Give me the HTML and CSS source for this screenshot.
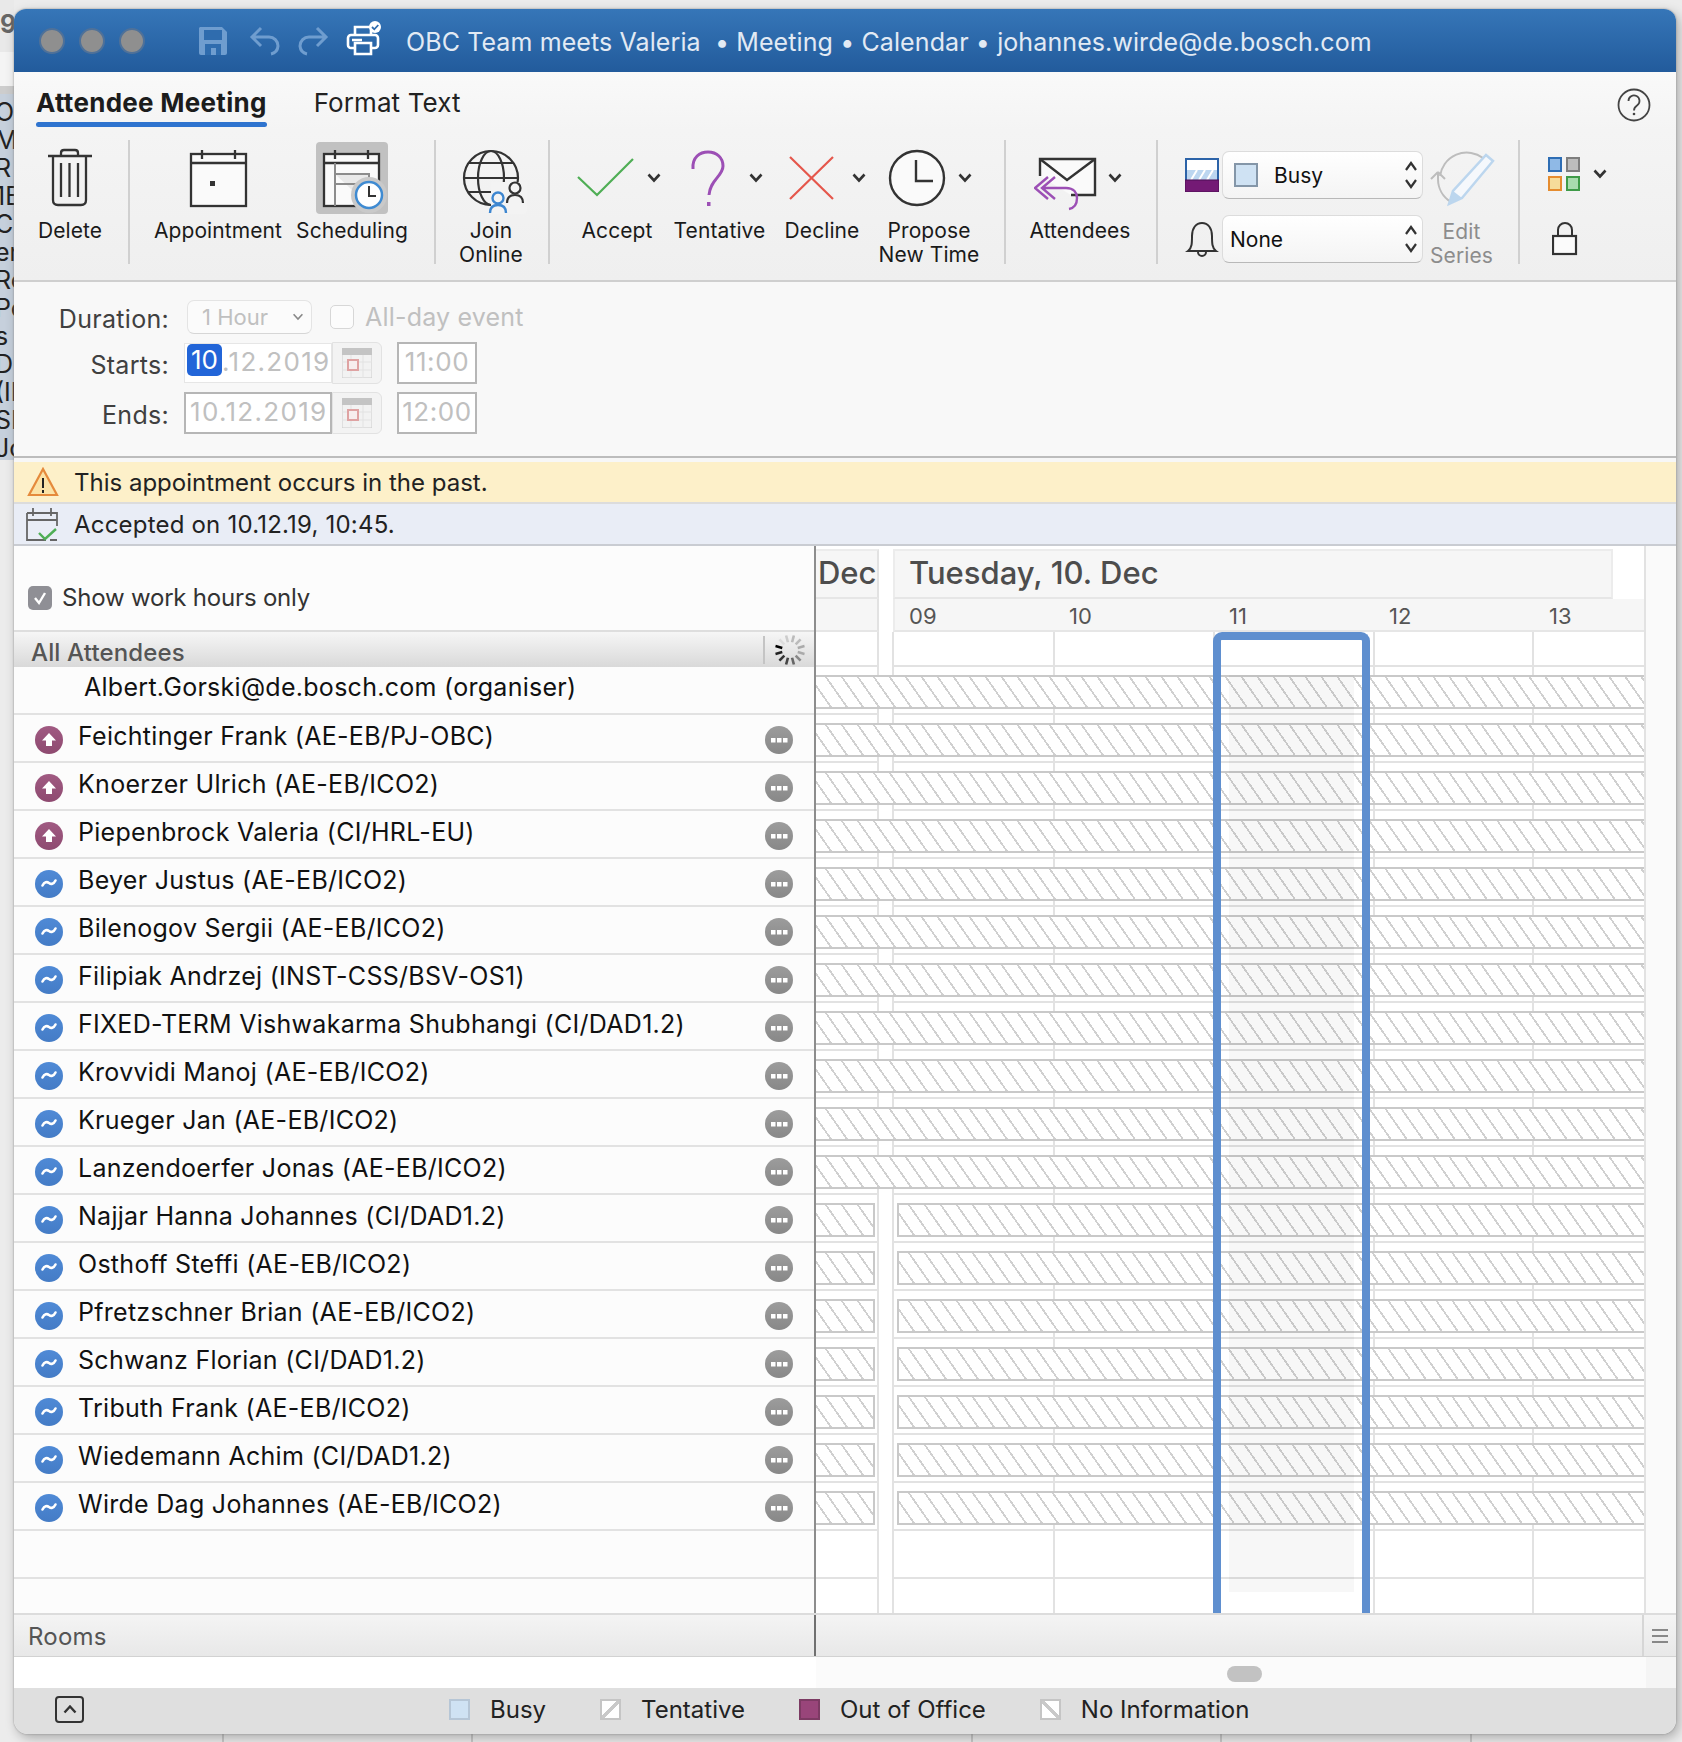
FILE: index.html
```html
<!DOCTYPE html>
<html lang="en">
<head>
<meta charset="utf-8">
<title>OBC Team meets Valeria</title>
<link rel="stylesheet" href="styles.css">
</head>
<body>
<svg class="defs" width="0" height="0" aria-hidden="true">
  <defs>
    <linearGradient id="gUp" x1="0" y1="0" x2="0" y2="1"><stop offset="0" stop-color="#a05a82"/><stop offset="1" stop-color="#8e4a70"/></linearGradient>
    <linearGradient id="gTilde" x1="0" y1="0" x2="0" y2="1"><stop offset="0" stop-color="#4f8ad6"/><stop offset="1" stop-color="#447cc6"/></linearGradient>
    <linearGradient id="gDots" x1="0" y1="0" x2="0" y2="1"><stop offset="0" stop-color="#9c9c9c"/><stop offset="1" stop-color="#888"/></linearGradient>
    <symbol id="up" viewBox="0 0 28 28"><circle cx="14" cy="14" r="14" fill="url(#gUp)"/><path d="M14 7l7 7.500h-4v5.500h-6v-5.500H7z" fill="#fff"/></symbol>
    <symbol id="tilde" viewBox="0 0 28 28"><circle cx="14" cy="14" r="14" fill="url(#gTilde)"/><path d="M7.500 15.500c2-4 4.500-4 6.500-2.500s4.500 1.500 6.500-2.500" fill="none" stroke="#fff" stroke-width="2.600" stroke-linecap="round"/></symbol>
    <symbol id="dots" viewBox="0 0 28 28"><circle cx="14" cy="14" r="14" fill="url(#gDots)"/><rect x="6" y="12" width="4.500" height="4.500" fill="#fff"/><rect x="12" y="12" width="4.500" height="4.500" fill="#fff"/><rect x="18" y="12" width="4.500" height="4.500" fill="#fff"/></symbol>
    <symbol id="chev" viewBox="0 0 14 10"><path d="M1.500 1.500L7 7.500l5.500-6" fill="none" stroke="#333" stroke-width="2.600"/></symbol>
    <symbol id="updown" viewBox="0 0 14 34"><path d="M2 12l5-7 5 7M2 22l5 7 5-7" fill="none" stroke="#333" stroke-width="2.200"/></symbol>
    <symbol id="cal" viewBox="0 0 30 30"><rect x="0" y="0" width="30" height="30" fill="#f2f2f2" stroke="#ccc"/><rect width="30" height="7" fill="#c4c4c4"/><path d="M0 14h30M0 22h30M9 7v23M21 7v23" stroke="#e2e2e2"/><rect x="6" y="12" width="10" height="10" fill="#f7eeee" stroke="#dfa3a3" stroke-width="2"/></symbol>
  </defs>
</svg>
<div class="desk">
  <div class="strip">
    <div class="strip-top"><span class="nine">9</span></div>
    <div class="strip-list">
      <div>O</div><div>M</div><div>R</div><div>1E</div><div>Cc</div><div>er</div><div>Rc</div><div>Pe</div><div>s</div><div>Di</div><div>(II</div><div>SI</div><div>Jc</div>
    </div>
    <div class="strip-rest"></div>
  </div>
  <main class="window">
    <header class="titlebar">
      <span class="light"></span><span class="light"></span><span class="light"></span>
      <svg class="tb-save" width="30" height="30" viewBox="0 0 30 30"><path d="M2 1h22l5 5v21a2 2 0 0 1-2 2H3a2 2 0 0 1-2-2V2z" fill="#6f9dcf"/><rect x="6" y="4" width="18" height="10" fill="#2f6cae"/><path d="M7 29v-11h16v11h-5v-7h-5v7z" fill="#2f6cae"/></svg>
      <svg class="tb-undo" width="32" height="30" viewBox="0 0 32 30"><path d="M12 2L3 11l9 9M3 11h17a9 9 0 0 1 9 9 9 9 0 0 1-7 8" fill="none" stroke="#6f9dcf" stroke-width="3"/></svg>
      <svg class="tb-redo" width="32" height="30" viewBox="0 0 32 30"><path d="M20 2l9 9-9 9M29 11H12a9 9 0 0 0-9 9 9 9 0 0 0 7 8" fill="none" stroke="#6f9dcf" stroke-width="3"/></svg>
      <svg class="tb-print" width="36" height="36" viewBox="0 0 36 36"><path d="M9 14V6h16v8M9 27H5a3 3 0 0 1-3-3V17a3 3 0 0 1 3-3h24a3 3 0 0 1 3 3v7a3 3 0 0 1-3 3h-4M9 22h16v11H9z" fill="none" stroke="#fff" stroke-width="2.600"/><path d="M6 19h10" stroke="#fff" stroke-width="2.600"/><circle cx="29" cy="6" r="6" fill="#fff"/><path d="M26 6l2.300 2.300 4-4.300" fill="none" stroke="#2f6cae" stroke-width="1.800"/></svg>
      <span class="title-text">OBC Team meets Valeria &nbsp;• Meeting • Calendar • johannes.wirde@de.bosch.com</span>
    </header>

    <nav class="tabs">
      <span class="tab tab-on">Attendee Meeting</span>
      <span class="tab">Format Text</span>
      <svg class="help" width="34" height="34" viewBox="0 0 34 34"><circle cx="17" cy="17" r="15.500" fill="none" stroke="#444" stroke-width="1.800"/><path d="M11.500 13a5.500 5.500 0 1 1 8.500 4.500c-2 1.300-3 2-3 5" fill="none" stroke="#444" stroke-width="1.800"/><circle cx="17" cy="26" r="1.300" fill="#444"/></svg>
    </nav>

    <section class="ribbon">
      <div class="group g1">
        <div class="item w112">
          <svg class="ico" width="48" height="72" viewBox="0 0 48 72"><g fill="none" stroke="#333" stroke-width="2.300"><path d="M2 14h44M7 14v44q0 5 5 5h23q5 0 5-5V14M15 14v-3q0-3 3-3h11q3 0 3 3v3M15 21v34M23.500 21v34M32 21v34"/></g></svg>
          <div class="lbl">Delete</div>
        </div>
      </div>
      <div class="group g2">
        <div class="item w134">
          <svg class="ico" width="72" height="72" viewBox="0 0 72 72"><rect x="9" y="12" width="55" height="52" fill="#fafafa" stroke="#333" stroke-width="2.300"/><path d="M9 21h55M20 8v9M53 8v9" stroke="#333" stroke-width="2.300"/><rect x="28" y="39" width="5" height="5" fill="#333"/></svg>
          <div class="lbl">Appointment</div>
        </div>
        <div class="item w134">
          <svg class="ico ico-on" width="72" height="72" viewBox="0 0 72 72"><rect x="8" y="12" width="55" height="52" fill="#fafafa" stroke="#333" stroke-width="2.300"/><path d="M8 21h55M19 8v9M52 8v9" stroke="#333" stroke-width="2.300"/><path d="M19 21v43M19 32h34v32M19 42h34" fill="#e9e9e9" stroke="#8c8c8c" stroke-width="2"/><circle cx="53" cy="53" r="18" fill="#c9c9c9"/><circle cx="53" cy="53" r="13" fill="#fff" stroke="#3f8bd2" stroke-width="2.500"/><path d="M53 44v10h7" fill="none" stroke="#333" stroke-width="2"/></svg>
          <div class="lbl">Scheduling</div>
        </div>
      </div>
      <div class="group g3">
        <div class="item w110">
          <svg class="ico" width="72" height="72" viewBox="0 0 72 72"><g fill="none" stroke="#333" stroke-width="2.200"><circle cx="36" cy="36" r="27"/><ellipse cx="36" cy="36" rx="13" ry="27"/><path d="M9 36h54M13 21h46M13 50h46"/></g><rect x="36" y="40" width="36" height="32" fill="#f3f3f3"/><circle cx="60" cy="46" r="5.500" fill="none" stroke="#333" stroke-width="2.200"/><path d="M52 61c0-6 3-8 8-8s8 2 8 8" fill="none" stroke="#333" stroke-width="2.200"/><circle cx="43" cy="56" r="5.500" fill="none" stroke="#3d86d0" stroke-width="2.400"/><path d="M35 71c0-6 3-8 8-8s8 2 8 8" fill="none" stroke="#3d86d0" stroke-width="2.400"/></svg>
          <div class="lbl">Join<br>Online</div>
        </div>
      </div>
      <div class="group g4">
        <div class="item w102">
          <div class="iconrow pad-accept">
            <svg width="66" height="72" viewBox="0 0 66 72"><path d="M6 35l19 18 36-36" fill="none" stroke="#4fae55" stroke-width="2.200"/></svg>
            <svg class="chev" width="14" height="10"><use href="#chev"/></svg>
          </div>
          <div class="lbl">Accept</div>
        </div>
        <div class="item w103">
          <div class="iconrow pad-tent">
            <svg width="44" height="72" viewBox="0 0 44 72"><path d="M7 27C6 15 14 10 22 10c9 0 15 6 15 14 0 10-13 14-14 29" fill="none" stroke="#9c4fb5" stroke-width="3"/><rect x="21" y="60" width="3.500" height="4" fill="#9c4fb5"/></svg>
            <svg class="chev" width="14" height="10"><use href="#chev"/></svg>
          </div>
          <div class="lbl">Tentative</div>
        </div>
        <div class="item w102">
          <div class="iconrow pad-dec">
            <svg width="50" height="72" viewBox="0 0 50 72"><path d="M4 15l43 42M47 15L4 57" fill="none" stroke="#e5574c" stroke-width="2.200"/></svg>
            <svg class="chev" width="14" height="10"><use href="#chev"/></svg>
          </div>
          <div class="lbl">Decline</div>
        </div>
        <div class="item w112">
          <div class="iconrow pad-prop">
            <svg width="60" height="72" viewBox="0 0 60 72"><circle cx="30" cy="36" r="27" fill="#fafafa" stroke="#333" stroke-width="2.400"/><path d="M29 18v21h17" fill="none" stroke="#333" stroke-width="2.400"/></svg>
            <svg class="chev" width="14" height="10"><use href="#chev"/></svg>
          </div>
          <div class="lbl">Propose<br>New Time</div>
        </div>
      </div>
      <div class="group g5">
        <div class="item w120">
          <div class="iconrow pad-att">
            <svg width="66" height="72" viewBox="0 0 66 72"><path d="M6 34V17h55v36H37" fill="#fafafa" stroke="#333" stroke-width="2.400"/><path d="M6 17l27 21 28-21" fill="none" stroke="#333" stroke-width="2.400"/><path d="M21 35L8 46l13 11M14 35L1 46l13 11M8 46h24c8 0 11 5 11 10 0 6-3 10-8 11" fill="none" stroke="#9c4fb5" stroke-width="2.400"/></svg>
            <svg class="chev" width="14" height="10"><use href="#chev"/></svg>
          </div>
          <div class="lbl">Attendees</div>
        </div>
      </div>
      <div class="group g6">
        <div class="selects">
          <div class="selrow">
            <svg width="34" height="34" viewBox="0 0 34 34"><rect x="1" y="1" width="32" height="32" fill="#fff" stroke="#2c63a8" stroke-width="2"/><rect x="2" y="12" width="30" height="10" fill="#bcd6f0"/><path d="M6 22l6-10M14 22l6-10M22 22l6-10" stroke="#fff" stroke-width="2"/><rect y="22" width="34" height="12" fill="#741a75" stroke="#4a0f55"/></svg>
            <div class="sel"><span class="swatch-busy"></span><span>Busy</span><svg class="ud" width="14" height="34"><use href="#updown"/></svg></div>
          </div>
          <div class="selrow">
            <svg width="34" height="40" viewBox="0 0 34 40"><path d="M3 32c4-3 4-8 4-15 0-8 4-13 10-13s10 5 10 13c0 7 0 12 4 15zM13 33a4 4 0 0 0 8 0" fill="none" stroke="#333" stroke-width="2"/></svg>
            <div class="sel sel-none"><span>None</span><svg class="ud" width="14" height="34"><use href="#updown"/></svg></div>
          </div>
        </div>
        <div class="item w76">
          <svg class="ico" width="70" height="72" viewBox="0 0 70 72"><path d="M12 34a27 27 0 0 1 43-18M10 30l-7 7M10 30l7 7M10 30v7a27 27 0 0 0 13 23" fill="none" stroke="#bdbdbd" stroke-width="2"/><path d="M58 13l7 6-31 37-13 6 4-13z" fill="#f5f8fc" stroke="#bcd6ee" stroke-width="2.500"/><path d="M21 62l4-13 9 7z" fill="#bcd6ee"/></svg>
          <div class="lbl lbl-off">Edit<br>Series</div>
        </div>
      </div>
      <div class="group g7">
        <div class="tiles">
          <svg width="34" height="34" viewBox="0 0 34 34"><rect x="1" y="1" width="12" height="13" fill="#8fb9e6" stroke="#2d6db4" stroke-width="2"/><rect x="19" y="1" width="12" height="13" fill="#bdbdbd" stroke="#7e7e7e" stroke-width="2"/><rect x="1" y="20" width="12" height="13" fill="#f6dc9a" stroke="#e58c2f" stroke-width="2"/><rect x="19" y="20" width="12" height="13" fill="#a9dcae" stroke="#3f9b48" stroke-width="2"/></svg>
          <svg class="chev-tiles" width="14" height="10"><use href="#chev"/></svg>
        </div>
        <svg class="lock" width="26" height="34" viewBox="0 0 26 34"><path d="M6 14V8a7 7 0 0 1 14 0v6" fill="none" stroke="#333" stroke-width="2"/><rect x="1" y="14" width="23" height="18" fill="#fbfbfb" stroke="#333" stroke-width="2.200"/></svg>
      </div>
    </section>

    <section class="form">
      <div class="frow">
        <label class="flabel">Duration:</label>
        <div class="dur">1 Hour<svg width="12" height="8" viewBox="0 0 14 10"><path d="M1.500 1.500L7 7.500l5.500-6" fill="none" stroke="#888" stroke-width="2"/></svg></div>
        <span class="chk"></span>
        <span class="allday">All-day event</span>
      </div>
      <div class="frow frow-date">
        <label class="flabel">Starts:</label>
        <div class="datef datef-focus"><span class="sel10">10</span>.12.2019</div>
        <div class="calbtn"><svg width="30" height="30"><use href="#cal"/></svg></div>
        <div class="timef">11:00</div>
      </div>
      <div class="frow frow-date">
        <label class="flabel">Ends:</label>
        <div class="datef">10.12.2019</div>
        <div class="calbtn"><svg width="30" height="30"><use href="#cal"/></svg></div>
        <div class="timef">12:00</div>
      </div>
    </section>

    <div class="note note-warn">
      <svg width="32" height="30" viewBox="0 0 32 30"><path d="M16 2L2 28h28z" fill="#fbe3a8" stroke="#e58a3c" stroke-width="2.200"/><path d="M16 11v10M16 23v3" stroke="#222" stroke-width="2"/></svg>
      <span>This appointment occurs in the past.</span>
    </div>
    <div class="note note-info">
      <svg width="32" height="34" viewBox="0 0 32 34"><path d="M1 6h30v13M1 6v27h19M1 13h30M7 1v8M25 1v8M24 33h7" fill="none" stroke="#666" stroke-width="1.800"/><path d="M13 26l6 6 11-10" fill="none" stroke="#4fae55" stroke-width="2.400"/></svg>
      <span>Accepted on 10.12.19, 10:45.</span>
    </div>

    <section class="split">
      <div class="people">
        <div class="workhours"><span class="cb-on"><svg width="24" height="24" viewBox="0 0 24 24"><path d="M7 12l4 5 6-10" fill="none" stroke="#fff" stroke-width="2.400"/></svg></span><span>Show work hours only</span></div>
        <div class="allhead">
          <span>All Attendees</span>
          <span class="allsep"></span>
          <svg class="spin" width="32" height="32" viewBox="-16 -16 32 32"><g stroke-width="2.600">
            <path d="M0-8v-7" stroke="#ccc" transform="rotate(-15)"/><path d="M0-8v-7" stroke="#bbb" transform="rotate(15)"/><path d="M0-8v-7" stroke="#bbb" transform="rotate(45)"/><path d="M0-8v-7" stroke="#aaa" transform="rotate(75)"/><path d="M0-8v-7" stroke="#aaa" transform="rotate(105)"/><path d="M0-8v-7" stroke="#888" transform="rotate(135)"/><path d="M0-8v-7" stroke="#666" transform="rotate(165)"/><path d="M0-8v-7" stroke="#444" transform="rotate(195)"/><path d="M0-8v-7" stroke="#333" transform="rotate(225)"/><path d="M0-8v-7" stroke="#222" transform="rotate(255)"/><path d="M0-8v-7" stroke="#000" transform="rotate(285)"/><path d="M0-8v-7" stroke="#ddd" transform="rotate(315)"/>
          </g></svg>
        </div>
        <div class="person person-org"><span class="pname">Albert.Gorski@de.bosch.com (organiser)</span></div>
        <div class="person"><svg class="st"><use href="#up"/></svg><span class="pname">Feichtinger Frank (AE-EB/PJ-OBC)</span><svg class="more"><use href="#dots"/></svg></div>
        <div class="person"><svg class="st"><use href="#up"/></svg><span class="pname">Knoerzer Ulrich (AE-EB/ICO2)</span><svg class="more"><use href="#dots"/></svg></div>
        <div class="person"><svg class="st"><use href="#up"/></svg><span class="pname">Piepenbrock Valeria (CI/HRL-EU)</span><svg class="more"><use href="#dots"/></svg></div>
        <div class="person"><svg class="st"><use href="#tilde"/></svg><span class="pname">Beyer Justus (AE-EB/ICO2)</span><svg class="more"><use href="#dots"/></svg></div>
        <div class="person"><svg class="st"><use href="#tilde"/></svg><span class="pname">Bilenogov Sergii (AE-EB/ICO2)</span><svg class="more"><use href="#dots"/></svg></div>
        <div class="person"><svg class="st"><use href="#tilde"/></svg><span class="pname">Filipiak Andrzej (INST-CSS/BSV-OS1)</span><svg class="more"><use href="#dots"/></svg></div>
        <div class="person"><svg class="st"><use href="#tilde"/></svg><span class="pname">FIXED-TERM Vishwakarma Shubhangi (CI/DAD1.2)</span><svg class="more"><use href="#dots"/></svg></div>
        <div class="person"><svg class="st"><use href="#tilde"/></svg><span class="pname">Krovvidi Manoj (AE-EB/ICO2)</span><svg class="more"><use href="#dots"/></svg></div>
        <div class="person"><svg class="st"><use href="#tilde"/></svg><span class="pname">Krueger Jan (AE-EB/ICO2)</span><svg class="more"><use href="#dots"/></svg></div>
        <div class="person"><svg class="st"><use href="#tilde"/></svg><span class="pname">Lanzendoerfer Jonas (AE-EB/ICO2)</span><svg class="more"><use href="#dots"/></svg></div>
        <div class="person"><svg class="st"><use href="#tilde"/></svg><span class="pname">Najjar Hanna Johannes (CI/DAD1.2)</span><svg class="more"><use href="#dots"/></svg></div>
        <div class="person"><svg class="st"><use href="#tilde"/></svg><span class="pname">Osthoff Steffi (AE-EB/ICO2)</span><svg class="more"><use href="#dots"/></svg></div>
        <div class="person"><svg class="st"><use href="#tilde"/></svg><span class="pname">Pfretzschner Brian (AE-EB/ICO2)</span><svg class="more"><use href="#dots"/></svg></div>
        <div class="person"><svg class="st"><use href="#tilde"/></svg><span class="pname">Schwanz Florian (CI/DAD1.2)</span><svg class="more"><use href="#dots"/></svg></div>
        <div class="person"><svg class="st"><use href="#tilde"/></svg><span class="pname">Tributh Frank (AE-EB/ICO2)</span><svg class="more"><use href="#dots"/></svg></div>
        <div class="person"><svg class="st"><use href="#tilde"/></svg><span class="pname">Wiedemann Achim (CI/DAD1.2)</span><svg class="more"><use href="#dots"/></svg></div>
        <div class="person"><svg class="st"><use href="#tilde"/></svg><span class="pname">Wirde Dag Johannes (AE-EB/ICO2)</span><svg class="more"><use href="#dots"/></svg></div>
        <div class="person"></div>
      </div>
      <div class="gantt">
        <div class="gmain">
          <div class="ghead">
            <div class="dayrow"><div class="daycell-dec">Dec</div><div class="daycell">Tuesday, 10. Dec</div></div>
            <div class="hourrow"><div class="hourcell-dec"></div><div class="hours"><span>09</span><span>10</span><span>11</span><span>12</span><span>13</span></div></div>
          </div>
          <div class="gbody">
            <div class="gtop"></div>
            <div class="grow"><div class="bar bar-full"></div></div>
            <div class="grow"><div class="bar bar-full"></div></div>
            <div class="grow"><div class="bar bar-full"></div></div>
            <div class="grow"><div class="bar bar-full"></div></div>
            <div class="grow"><div class="bar bar-full"></div></div>
            <div class="grow"><div class="bar bar-full"></div></div>
            <div class="grow"><div class="bar bar-full"></div></div>
            <div class="grow"><div class="bar bar-full"></div></div>
            <div class="grow"><div class="bar bar-full"></div></div>
            <div class="grow"><div class="bar bar-full"></div></div>
            <div class="grow"><div class="bar bar-full"></div></div>
            <div class="grow"><div class="bar bar-a"></div><div class="bar bar-b"></div></div>
            <div class="grow"><div class="bar bar-a"></div><div class="bar bar-b"></div></div>
            <div class="grow"><div class="bar bar-a"></div><div class="bar bar-b"></div></div>
            <div class="grow"><div class="bar bar-a"></div><div class="bar bar-b"></div></div>
            <div class="grow"><div class="bar bar-a"></div><div class="bar bar-b"></div></div>
            <div class="grow"><div class="bar bar-a"></div><div class="bar bar-b"></div></div>
            <div class="grow"><div class="bar bar-a"></div><div class="bar bar-b"></div></div>
            <div class="grow"></div>
            <div class="shade"></div>
            <div class="selection"></div>
          </div>
        </div>
        <div class="gside"></div>
      </div>
    </section>

    <section class="rooms">
      <div class="rooms-l">Rooms</div>
      <div class="rooms-r"><span class="rooms-fill"></span><span class="rooms-menu"><i></i><i></i><i></i></span></div>
    </section>
    <section class="scrollrow">
      <div class="scroll-l"></div>
      <div class="scroll-r"><span class="thumb"></span></div>
      <div class="scroll-e"></div>
    </section>
    <footer class="legend">
      <span class="upbtn"><svg width="14" height="10" viewBox="0 0 14 10"><path d="M1.500 8.500L7 2.500l5.500 6" fill="none" stroke="#333" stroke-width="2.400"/></svg></span>
      <span class="key key-busy"></span><span class="keytext t-busy">Busy</span>
      <span class="key key-tent"></span><span class="keytext t-tent">Tentative</span>
      <span class="key key-oof"></span><span class="keytext t-oof">Out of Office</span>
      <span class="key key-none"></span><span class="keytext">No Information</span>
    </footer>
  </main>
</div>
</body>
</html>
```
FILE: styles.css
```css
* { box-sizing: border-box; }
html, body { margin: 0; padding: 0; }
body {
  width: 1682px;
  height: 1742px;
  overflow: hidden;
  font-family: Inter, "Liberation Sans", sans-serif;
  color: #111;
  background:
    linear-gradient(#c9c9c9, #c9c9c9) 222px 1734px / 2px 8px no-repeat,
    linear-gradient(#c9c9c9, #c9c9c9) 471px 1734px / 2px 8px no-repeat,
    linear-gradient(#c9c9c9, #c9c9c9) 971px 1734px / 2px 8px no-repeat,
    linear-gradient(#c9c9c9, #c9c9c9) 1220px 1734px / 2px 8px no-repeat,
    linear-gradient(#c9c9c9, #c9c9c9) 1470px 1734px / 2px 8px no-repeat,
    #ececec;
}
.defs { position: absolute; }
.desk { display: flex; height: 1742px; }

.strip { width: 14px; flex: none; display: flex; flex-direction: column; overflow: hidden; color: #222; font-size: 25px; }
.strip-top { height: 94px; background: linear-gradient(#e9e9e9 0 52px, #f4f4f4 52px 86px, #cdcdcd 86px); overflow: hidden; }
.nine { display: block; margin-top: 8px; font-weight: 700; color: #666; line-height: 32px; }
.strip-list { height: 366px; background: #c6d0dc; padding-top: 4px; line-height: 28px; white-space: nowrap; overflow: hidden; }
.strip-list div { margin-left: -5px; }
.strip-rest { flex: 1; background: #ececec; }

.window {
  width: 1662px;
  height: 1725px;
  margin-top: 9px;
  display: flex;
  flex-direction: column;
  border-radius: 12px 12px 14px 14px;
  background: #f7f7f7;
  box-shadow: 0 0 2px #888, 3px 4px 12px rgba(0,0,0,.28);
  overflow: hidden;
}

.titlebar {
  height: 63px;
  flex: none;
  display: flex;
  align-items: center;
  padding-left: 25px;
  background: linear-gradient(#3676b8, #225b9c);
}
.light { width: 26px; height: 26px; border-radius: 50%; background: #8f8f8f; border: 2px solid #4f7199; margin-right: 14px; }
.tb-save { margin-left: 39px; }
.tb-undo { margin-left: 21px; }
.tb-redo { margin-left: 16px; }
.tb-print { margin-left: 17px; margin-top: -3px; }
.title-text { margin-left: 24px; margin-top: 3px; font-size: 25px; color: #e2eaf4; white-space: nowrap; letter-spacing: .1px; }

.tabs { height: 59px; flex: none; display: flex; align-items: center; padding: 2px 25px 0 22px; background: linear-gradient(#f9f9f9, #f4f4f4); }
.tab { font-size: 26px; margin-right: 47px; line-height: 34px; position: relative; color: #222; letter-spacing: .1px; }
.tab-on { font-weight: 700; color: #1c1c1c; letter-spacing: .28px; }
.tab-on::after { content: ""; position: absolute; left: 0; right: 0; bottom: -7px; height: 5px; border-radius: 3px; background: #2f74cf; }
.help { margin-left: auto; margin-top: 4px; }

.ribbon { height: 151px; flex: none; display: flex; padding-top: 9px; background: linear-gradient(#f4f4f4, #efefef); border-bottom: 2px solid #cfcfcf; }
.group { height: 124px; display: flex; border-right: 2px solid #d0d0d0; }
.g1 { width: 116px; }
.g2 { width: 306px; padding-left: 21px; }
.g3 { width: 114px; padding-left: 0; }
.g4 { width: 456px; padding-left: 16px; }
.g5 { width: 152px; padding-left: 14px; }
.g6 { width: 362px; padding-left: 27px; }
.g7 { border-right: 0; padding-left: 28px; flex-direction: column; }
.item { display: flex; flex-direction: column; align-items: center; padding-top: 2px; }
.w76 { width: 76px; }
.w102 { width: 102px; }
.w103 { width: 103px; }
.w110 { width: 110px; }
.w112 { width: 112px; }
.w120 { width: 120px; }
.w134 { width: 134px; }
.ico { display: block; flex: none; border-radius: 4px; }
.ico-on { background: #c1c1c1; }
.lbl { margin-top: 5px; font-size: 21px; line-height: 24px; text-align: center; color: #1a1a1a; white-space: nowrap; letter-spacing: .1px; flex: none; }
.lbl-off { color: #8c8c8c; margin-top: 6px; margin-right: 3px; }
.iconrow { width: 100%; height: 72px; flex: none; display: flex; align-items: center; }
.pad-accept { padding-left: 6px; }
.pad-tent { padding-left: 18px; }
.pad-dec { padding-left: 15px; }
.pad-prop { padding-left: 14px; }
.pad-att { padding-left: 14px; }
.chev { margin-left: 10px; flex: none; }
.pad-accept .chev { margin-left: 9px; }
.pad-tent .chev { margin-left: 19px; }
.pad-dec .chev { margin-left: 16px; }
.pad-prop .chev { margin-left: 11px; }
.pad-att .chev { margin-left: 8px; }

.selects { width: 240px; display: flex; flex-direction: column; gap: 16px; padding-top: 11px; }
.selrow { display: flex; align-items: center; gap: 3px; height: 48px; }
.sel { width: 201px; height: 48px; display: flex; align-items: center; padding: 0 4px 0 8px; background: linear-gradient(#fff, #f4f4f4); border: 1px solid #dcdcdc; border-bottom-color: #b8b8b8; border-radius: 7px; font-size: 21px; }
.sel-none { padding-left: 7px; }
.swatch-busy { width: 24px; height: 24px; margin: 0 16px 0 3px; background: #cfe2f3; border: 2px solid #8496a8; }
.ud { margin-left: auto; }
.g7 svg { display: block; }
.tiles { display: flex; align-items: center; height: 38px; margin-top: 15px; }
.chev-tiles { margin-left: 11px; }
.lock { margin: 29px 0 0 4px; }

.form { height: 176px; flex: none; display: flex; flex-direction: column; gap: 8px; padding-top: 18px; background: #f8f8f8; border-bottom: 2px solid #bdbdbd; }
.frow { display: flex; align-items: center; height: 34px; }
.frow-date { height: 42px; }
.flabel { width: 155px; padding-top: 4px; text-align: right; font-size: 25px; color: #404040; margin-right: 15px; letter-spacing: .3px; }
.dur { width: 125px; height: 34px; margin-left: 3px; display: flex; align-items: center; justify-content: space-between; padding: 0 7px 0 14px; background: #fbfbfb; border: 1px solid #e4e4e4; border-bottom-color: #d6d6d6; border-radius: 7px; font-size: 22px; color: #c0c0c0; }
.chk { width: 24px; height: 24px; margin-left: 18px; border-radius: 5px; background: #fcfcfc; border: 1px solid #d7d7d7; }
.allday { margin-left: 11px; font-size: 25px; color: #c0c0c0; letter-spacing: .2px; }
.datef { width: 148px; height: 42px; border: 2px solid #b6b6b6; background: #fff; font-size: 26px; letter-spacing: 1.3px; color: #c0c0c0; padding-left: 4px; line-height: 36px; white-space: nowrap; overflow: hidden; }
.datef-focus { border: 1px solid #e6e6e6; padding-left: 2px; height: 40px; }
.sel10 { display: inline-block; width: 35px; height: 32px; line-height: 32px; background: #2265d8; color: #fff; border-radius: 5px; text-align: center; vertical-align: top; letter-spacing: 0; }
.calbtn { width: 50px; height: 42px; display: flex; align-items: center; justify-content: center; background: #f3f3f3; border: 1px solid #e2e2e2; border-radius: 0 6px 6px 0; }
.timef { width: 80px; height: 42px; margin-left: 15px; border: 2px solid #b6b6b6; background: #fff; font-size: 26px; letter-spacing: .6px; color: #c0c0c0; text-align: center; line-height: 36px; }

.note { display: flex; align-items: center; flex: none; font-size: 24px; color: #222; }
.note svg { flex: none; }
.note span { white-space: nowrap; }
.note-warn { height: 42px; margin-top: 4px; padding-left: 13px; background: #fdf0c9; border-bottom: 2px solid #dcdcdc; }
.note-warn span { margin-left: 15px; }
.note-info { height: 42px; padding-left: 12px; background: #e9edf6; border-bottom: 2px solid #c9ccd2; }
.note-info span { margin-left: 16px; letter-spacing: .2px; }

.split { height: 1067px; flex: none; display: flex; }
.people { width: 802px; flex: none; background: #fcfcfc; border-right: 2px solid #8d8d8d; }
.workhours { height: 86px; display: flex; align-items: center; padding: 19px 0 0 14px; font-size: 24px; letter-spacing: -.2px; color: #333; border-bottom: 2px solid #dedede; }
.cb-on { width: 24px; height: 24px; margin-right: 10px; border-radius: 5px; background: #8f8f95; }
.cb-on svg { display: block; }
.allhead { height: 35px; display: flex; align-items: center; padding: 5px 0 0 17px; font-size: 24px; font-weight: 500; letter-spacing: .15px; color: #555; background: linear-gradient(#f6f6f6, #d9d9d9); }
.allsep { width: 2px; height: 28px; margin: -5px 0 0 auto; background: #c4c4c4; }
.spin { margin: -5px 8px 0 9px; }
.person { height: 48px; display: flex; align-items: center; padding: 0 21px; border-bottom: 2px solid #e2e2e2; }
.person-org { padding-left: 70px; }
.st { width: 28px; height: 28px; margin-top: 3px; flex: none; }
.pname { margin-left: 15px; margin-top: -4px; font-size: 25px; letter-spacing: .28px; color: #111; white-space: nowrap; }
.person-org .pname { margin-left: 0; margin-top: -7px; }
.more { width: 28px; height: 28px; margin-top: 3px; margin-left: auto; flex: none; }

.gantt { flex: 1; display: flex; }
.gmain { width: 830px; flex: none; display: flex; flex-direction: column; background: #fff; border-right: 2px solid #e2e2e2; }
.gside { flex: 1; background: #fafafa; }
.ghead { height: 86px; flex: none; }
.dayrow { height: 53px; display: flex; padding-top: 3px; }
.daycell-dec { width: 63px; background: #f6f6f6; border-right: 2px solid #e2e2e2; border-bottom: 2px solid #e6e6e6; border-top: 2px solid #ececec; font-size: 31px; font-weight: 500; color: #4d4d4d; padding-left: 2px; line-height: 44px; overflow: hidden; white-space: nowrap; }
.daycell { width: 720px; margin-left: 14px; background: #f6f6f6; border: 2px solid #ececec; border-bottom-color: #e6e6e6; font-size: 31px; font-weight: 500; color: #4d4d4d; padding-left: 14px; line-height: 44px; }
.hourrow { height: 33px; display: flex; }
.hourcell-dec { width: 63px; background: #f6f6f6; border-right: 2px solid #e2e2e2; border-bottom: 2px solid #e6e6e6; }
.hours { width: 751px; margin-left: 14px; display: grid; grid-template-columns: repeat(5, 160px); background: #f6f6f6; border-bottom: 2px solid #e6e6e6; border-left: 2px solid #ececec; font-size: 22px; color: #555; line-height: 34px; }
.hours span { padding-left: 14px; }
.gbody {
  position: relative;
  flex: 1;
  background:
    linear-gradient(#e2e2e2, #e2e2e2) 61px 0 / 2px 100% no-repeat,
    linear-gradient(#e2e2e2, #e2e2e2) 76px 0 / 2px 100% no-repeat,
    linear-gradient(#e2e2e2, #e2e2e2) 237px 0 / 2px 100% no-repeat,
    linear-gradient(#e2e2e2, #e2e2e2) 397px 0 / 2px 100% no-repeat,
    linear-gradient(#e2e2e2, #e2e2e2) 557px 0 / 2px 100% no-repeat,
    linear-gradient(#e2e2e2, #e2e2e2) 716px 0 / 2px 100% no-repeat,
    #fff;
}
.gtop, .grow {
  background:
    linear-gradient(#e2e2e2, #e2e2e2) 0 100% / 63px 2px no-repeat,
    linear-gradient(#e2e2e2, #e2e2e2) 78px 100% / 750px 2px no-repeat;
}
.gtop { height: 35px; }
.grow { height: 48px; padding-top: 8px; display: flex; }
.bar {
  height: 34px;
  border: 2px solid #c9c9c9;
  background: repeating-linear-gradient(55deg, #fff 0 11.300px, #d0d0d0 11.300px 13.100px);
}
.bar-full { width: 828px; border-left: 0; border-right: 0; }
.bar-a { width: 59px; border-left: 0; }
.bar-b { width: 747px; margin-left: 22px; border-right: 0; }
.shade { position: absolute; left: 413px; top: 43px; width: 125px; height: 917px; background: rgba(0,0,0,.03); }
.selection { position: absolute; left: 397px; top: 0; width: 157px; bottom: 0; border: 8px solid #5f8fcf; border-bottom: 0; border-radius: 9px 9px 0 0; }

.rooms { height: 44px; flex: none; display: flex; background: linear-gradient(#f4f4f4, #e8e8e8); border-top: 2px solid #dcdcdc; border-bottom: 1px solid #d2d2d2; }
.rooms-l { width: 802px; flex: none; padding-left: 14px; border-right: 2px solid #707070; font-size: 24px; line-height: 43px; letter-spacing: .2px; color: #555; }
.rooms-r { flex: 1; display: flex; }
.rooms-fill { width: 828px; border-right: 2px solid #d6d6d6; }
.rooms-menu { flex: 1; display: flex; flex-direction: column; gap: 4px; justify-content: center; align-items: center; }
.rooms-menu i { display: block; width: 16px; height: 2px; background: #888; }

.scrollrow { height: 31px; flex: none; display: flex; }
.scroll-l { width: 802px; background: #fff; }
.scroll-r { width: 830px; background: #fbfbfb; display: flex; justify-content: flex-end; padding: 9px 384px 0 0; }
.thumb { width: 35px; height: 16px; border-radius: 8px; background: #c2c2c2; }
.scroll-e { flex: 1; background: #f5f5f5; }

.legend { height: 46px; flex: none; display: flex; align-items: center; padding-bottom: 4px; background: #dfdfdf; font-size: 24px; color: #222; }
.upbtn { width: 29px; height: 27px; margin-left: 41px; display: flex; align-items: center; justify-content: center; border: 2px solid #333; border-radius: 4px; }
.key { width: 21px; height: 21px; border: 2px solid #c5c5c5; flex: none; }
.key-busy { margin-left: 365px; background: #cfe2f3; border-color: #b6c6d6; }
.key-tent { background: linear-gradient(to bottom right, #fff 0 42%, #c9c9c9 42% 58%, #fff 58%); }
.key-oof { background: #99457a; border-color: #7c3a63; }
.key-none { background: linear-gradient(to top right, #fff 0 42%, #c9c9c9 42% 58%, #fff 58%); }
.keytext { margin-left: 20px; white-space: nowrap; }
.t-busy { margin-right: 54px; }
.t-tent { margin-right: 54px; }
.t-oof { margin-right: 54px; }
```
